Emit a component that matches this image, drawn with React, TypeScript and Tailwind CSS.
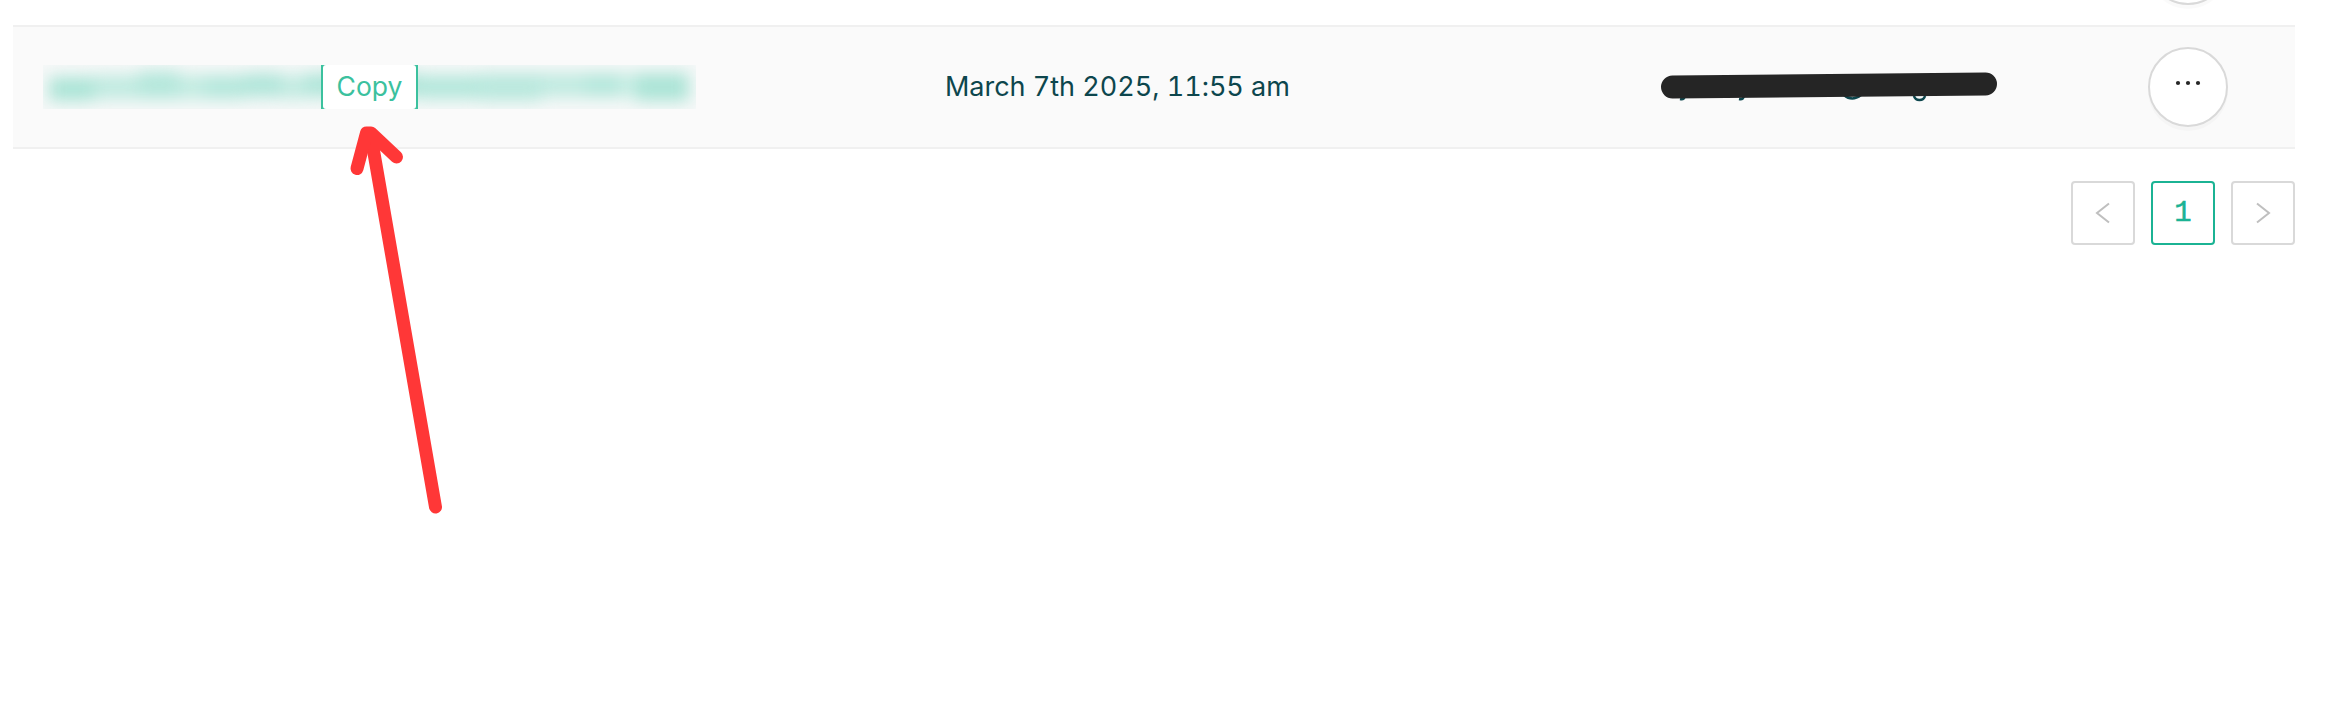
import type { ReactNode } from "react";

function MoreButton() {
  return (
    <button
      aria-label="More actions"
      className="flex h-20 w-20 shrink-0 items-center justify-center rounded-full border-2 border-[#d9d9d9] bg-white shadow-[0_4px_0_rgba(0,0,0,0.018)]"
    >
      <svg width="28" height="28" viewBox="0 0 28 28" className="-mt-2 fill-[#262626]">
        <circle cx="4" cy="14" r="2.1" />
        <circle cx="14" cy="14" r="2.1" />
        <circle cx="24" cy="14" r="2.1" />
      </svg>
    </button>
  );
}

function PageButton({ active = false, children }: { active?: boolean; children: ReactNode }) {
  return (
    <button
      className={
        active
          ? "flex h-16 w-16 items-center justify-center rounded-[4px] border-2 border-[#1bb394] bg-white text-[#1bb394]"
          : "flex h-16 w-16 items-center justify-center rounded-[4px] border-2 border-[#d9d9d9] bg-white text-[#bfbfbf]"
      }
    >
      {children}
    </button>
  );
}

const smudges = [
  "h-6 mt-3 w-[45px] bg-[#abe4d6]",
  "h-6 mt-2.5 w-[45px] bg-[#c0eae0]",
  "h-7 mt-1.5 w-[40px] bg-[#b4e7db]",
  "h-6 mt-2.5 w-[26px] bg-[#c2ebe1]",
  "h-6 mt-2.5 w-[40px] bg-[#b4e7db]",
  "h-6 mt-2 w-[36px] bg-[#b0e5d9]",
  "h-6 mt-2.5 w-[24px] bg-[#c2ebe1]",
  "h-6 mt-2 w-[114px] bg-[#b0e5d9]",
  "h-6 mt-2.5 w-[60px] bg-[#b4e7db]",
  "h-7 mt-2 w-[62px] bg-[#b9e8dd]",
  "h-6 mt-2 w-[44px] bg-[#c0eae0]",
  "h-6 mt-2 w-[36px] bg-[#b4e7db]",
  "h-6 mt-2 w-[14px] bg-[#cbeee5]",
  "h-7 mt-2 w-[54px] bg-[#abe4d6]",
];

function SecretCell() {
  return (
    <div className="relative h-11 w-[653px] overflow-hidden bg-[#f6f8f8]">
      <div className="ml-1.5 flex w-[640px] items-start blur-[8px]">
        {smudges.map((smudge, i) => (
          <span key={i} className={`shrink-0 ${smudge}`} />
        ))}
      </div>
      <div className="absolute left-[278px] top-0 h-11 w-[97px] bg-[#3bc19e] px-[2px]">
        <button className="flex h-11 w-full items-center justify-center rounded-[3px] bg-white pb-[2px] text-[26.5px] leading-10 text-[#3bc19e]">
          Copy
        </button>
      </div>
    </div>
  );
}

function RedactedCell() {
  return (
    <svg width="340" height="36" viewBox="1660 68 340 36" fill="none">
      <g stroke="#0d464d" strokeWidth="2.5">
        <path d="M1680 99q4 1 5-3" />
        <path d="M1739 99q4 1 5-3" />
        <path d="M1844 95q8 7 17 0" />
        <path d="M1914 96q1 4 5.500 4t5.500-4" />
      </g>
      <path d="M1672.500 87 1985.500 84" stroke="#252525" strokeWidth="23" strokeLinecap="round" />
    </svg>
  );
}

function Arrow() {
  return (
    <svg
      width="120"
      height="410"
      viewBox="330 110 120 410"
      fill="none"
      stroke="#ff3737"
      strokeWidth="13"
      strokeLinecap="round"
      strokeLinejoin="round"
      className="pointer-events-none absolute left-[330px] top-[110px]"
    >
      <path d="M435.500 507 371 136" />
      <path d="M357 168.500 366.500 133H371L396.500 157" />
    </svg>
  );
}

export default function App() {
  return (
    <main className="relative h-[710px] w-[2346px] overflow-hidden bg-white font-['Inter',sans-serif]">
      <div className="ml-[13px] w-[2282px]">
        <div className="flex h-[27px] items-end justify-end border-b-2 border-[#f0f0f0] pb-5 pr-[67px]">
          <MoreButton />
        </div>
        <div className="flex h-[122px] items-center border-b-2 border-[#f0f0f0] bg-[#fafafa] pl-[30px] pr-[67px]">
          <div className="w-[902px]">
            <SecretCell />
          </div>
          <div className="w-[715px] whitespace-nowrap text-[27px] leading-10 tracking-[-0.02px] text-[#0d464d] tabular-nums">
            March 7th 2025, 11:55 am
          </div>
          <div className="flex-1 pb-[2px]">
            <RedactedCell />
          </div>
          <MoreButton />
        </div>
        <nav className="mt-8 flex justify-end gap-4" aria-label="Pagination">
          <PageButton>
            <svg width="28" height="28" viewBox="0 0 28 28" fill="none" stroke="currentColor" strokeWidth="2">
              <path d="M20 4.500 8 14 20 23.500" />
            </svg>
          </PageButton>
          <PageButton active>
            <span className="font-['Liberation_Mono',monospace] text-[29px] leading-none [-webkit-text-stroke:0.500px_currentColor]">
              1
            </span>
          </PageButton>
          <PageButton>
            <svg width="28" height="28" viewBox="0 0 28 28" fill="none" stroke="currentColor" strokeWidth="2">
              <path d="M8 4.500 20 14 8 23.500" />
            </svg>
          </PageButton>
        </nav>
      </div>
      <Arrow />
    </main>
  );
}
